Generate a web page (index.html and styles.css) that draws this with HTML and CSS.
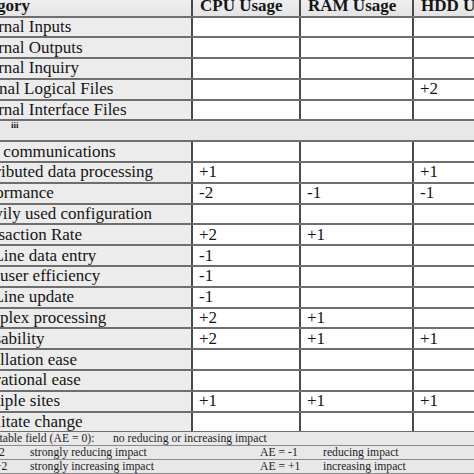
FILE: index.html
```html
<!DOCTYPE html>
<html>
<head>
<meta charset="utf-8">
<link rel="stylesheet" href="styles.css">
</head>
<body>
<div class="page">
<table class="grid">
  <colgroup>
    <col class="c-cat"><col class="c-cpu"><col class="c-ram"><col class="c-hdd">
  </colgroup>
  <thead>
    <tr class="head"><th>Category</th><th>CPU Usage</th><th>RAM Usage</th><th>HDD Usage</th></tr>
  </thead>
  <tbody>
    <tr><td class="cat">External Inputs</td><td></td><td></td><td></td></tr>
    <tr><td class="cat">External Outputs</td><td></td><td></td><td></td></tr>
    <tr><td class="cat">External Inquiry</td><td></td><td></td><td></td></tr>
    <tr><td class="cat">Internal Logical Files</td><td></td><td></td><td>+2</td></tr>
    <tr><td class="cat">External Interface Files</td><td></td><td></td><td></td></tr>
    <tr class="section"><td colspan="4"><span class="tiny">iii</span></td></tr>
    <tr><td class="cat">Data communications</td><td></td><td></td><td></td></tr>
    <tr><td class="cat">Distributed data processing</td><td>+1</td><td></td><td>+1</td></tr>
    <tr><td class="cat">Performance</td><td>-2</td><td>-1</td><td>-1</td></tr>
    <tr><td class="cat">Heavily used configuration</td><td></td><td></td><td></td></tr>
    <tr><td class="cat">Transaction Rate</td><td>+2</td><td>+1</td><td></td></tr>
    <tr><td class="cat">On-Line data entry</td><td>-1</td><td></td><td></td></tr>
    <tr><td class="cat">End-user efficiency</td><td>-1</td><td></td><td></td></tr>
    <tr><td class="cat">On-Line update</td><td>-1</td><td></td><td></td></tr>
    <tr><td class="cat">Complex processing</td><td>+2</td><td>+1</td><td></td></tr>
    <tr><td class="cat">Reusability</td><td>+2</td><td>+1</td><td>+1</td></tr>
    <tr><td class="cat">Installation ease</td><td></td><td></td><td></td></tr>
    <tr><td class="cat">Operational ease</td><td></td><td></td><td></td></tr>
    <tr><td class="cat">Multiple sites</td><td>+1</td><td>+1</td><td>+1</td></tr>
    <tr><td class="cat">Facilitate change</td><td></td><td></td><td></td></tr>
  </tbody>
</table>
<div class="legend">
  <div class="lrow l1"><span class="lab">Not affectable field (AE = 0):</span><span>no reducing or increasing impact</span></div>
  <div class="lrow l2"><span>AE = -2</span><span>strongly reducing impact</span><span>AE = -1</span><span>reducing impact</span></div>
  <div class="lrow l2"><span>AE = +2</span><span>strongly increasing impact</span><span>AE = +1</span><span>increasing impact</span></div>
</div>
</div>
</body>
</html>
```

FILE: styles.css
```css
html, body {
  margin: 0;
  padding: 0;
  background: #ffffff;
}
body {
  width: 474px;
  height: 474px;
  overflow: hidden;
  font-family: "Liberation Serif", "Times New Roman", serif;
  color: #151515;
}
.page {
  margin-left: -35px;
  margin-top: -6px;
  width: 580px;
}
.grid {
  border-collapse: collapse;
  table-layout: fixed;
  width: 566px;
  font-size: 17px;
}
.c-cat { width: 226px; }
.c-cpu { width: 108px; }
.c-ram { width: 113px; }
.c-hdd { width: 119px; }
.grid th, .grid td {
  border-top: 2px solid #6e6e6e;
  border-bottom: 2px solid #6e6e6e;
  border-left: 2px solid #4a4a4a;
  border-right: 2px solid #4a4a4a;
  padding: 0 0 0 6px;
  height: 18.8px;
  line-height: 18px;
  text-align: left;
  white-space: nowrap;
  overflow: hidden;
  vertical-align: middle;
}
.grid th {
  height: 19.5px;
  font-weight: bold;
  background: linear-gradient(#f2f2f2, #e4e4e4);
  padding-left: 7px;
}
.grid th:first-child {
  padding-left: 0;
  text-indent: -4px;
}
.grid td.cat {
  background: #ececec;
  padding-left: 0;
}
.section td {
  background: #e8e8e8;
  vertical-align: top;
  padding-left: 44px;
}
.tiny {
  display: block;
  font-size: 9px;
  line-height: 9px;
  font-weight: bold;
  color: #222;
  margin-top: 0;
}
.legend {
  font-size: 11.7px;
  background: #e8e8e8;
  margin-top: -1px;
  color: #1e1e1e;
}
.lrow {
  display: grid;
  height: 13px;
  line-height: 13px;
  border-bottom: 1.5px solid #8a8a8a;
  white-space: nowrap;
  overflow: hidden;
}
.l1 {
  grid-template-columns: 148px 1fr;
}
.l1 .lab {
  text-indent: -9px;
}
.l2 {
  grid-template-columns: 65px 230px 63px 1fr;
}
.l2 span:first-child {
  padding-left: 2px;
}
```
